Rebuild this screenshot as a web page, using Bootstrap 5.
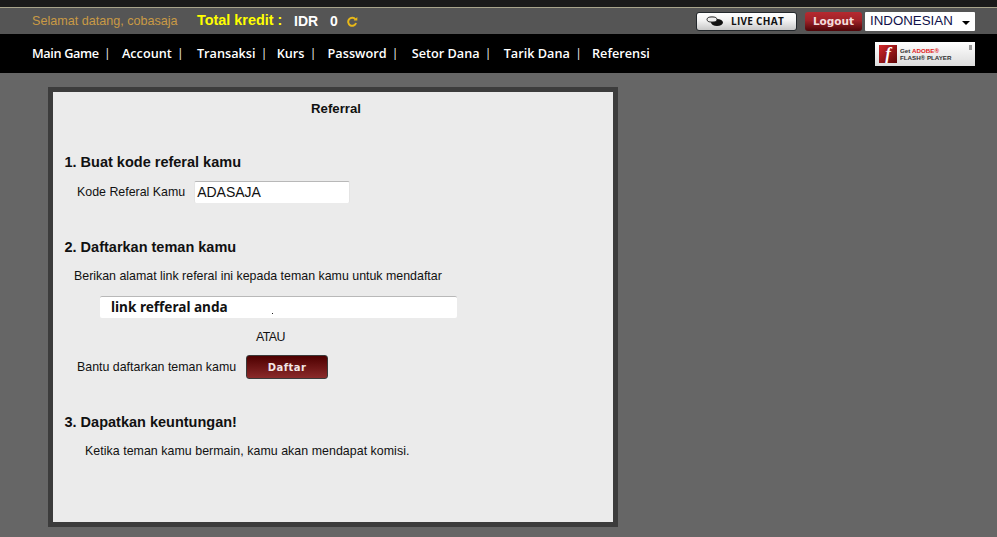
<!DOCTYPE html>
<html lang="id">
<head>
<meta charset="utf-8">
<title>Referral</title>
<link href="https://cdn.jsdelivr.net/npm/bootstrap@5.3.0/dist/css/bootstrap.min.css" rel="stylesheet">
<style>
html,body{height:100%}
body{background:#666;font-family:"Liberation Sans",Arial,sans-serif;font-size:12.4px;color:#111;overflow:hidden}
.strip-top{height:8px;background:#1a1a1a;border-bottom:1px solid #a8a48c}
.bar-info{height:26px;background:#555;padding-left:32px;padding-right:22px}
.welcome{color:#c99a45;width:165px;font-size:12.6px;white-space:nowrap}
.kredit{color:#ff0;font-size:14.4px;font-weight:700;width:97px;white-space:nowrap}
.idr{color:#fff;font-size:14px;font-weight:700;width:36px}
.zero{color:#fff;font-size:14px;font-weight:700;width:17px}
.chat-btn{width:101px;height:19px;background:linear-gradient(#fff,#f2f2f2 45%,#c8c8c8);border:1px solid #23282c;border-radius:3px;font:700 10px "Open Sans",sans-serif;color:#111;letter-spacing:.3px;margin-right:8px;gap:7px;padding-right:3px}
.out-btn{width:57px;height:19px;background:linear-gradient(#b52a30,#a02228 45%,#4d0508);border-radius:3px;color:#f3dcdc;font:700 10.5px "DejaVu Sans",sans-serif;margin-right:3px}
.lang{width:110px;height:19px;background:#fff;color:#10104a;font-size:13.3px;padding-left:5px;padding-right:5px;border-radius:1px}
.caret-dn{width:0;height:0;border-left:4px solid transparent;border-right:4px solid transparent;border-top:4px solid #000;margin-top:3px}
.bar-nav{height:39px;background:#000;padding-left:32px;padding-right:22px}
.menu-item{color:#fff;font:600 12.7px "Open Sans",sans-serif;text-decoration:none;margin-bottom:2px}
.menu-tight{letter-spacing:-.35px}
.sep{color:#ddd;font-size:12px;margin:0 13px 2px 7px}
.sep-wide{margin-right:15px}
.sep-narrow{margin-right:11px}
.sep-extra{margin-right:14px}
.sep-less{margin-right:12px}
.flash{width:100px;height:24px;background:linear-gradient(#fff,#dcdcdc);gap:3px;padding-left:4px}
.flash-ico{width:18px;height:18px;background:linear-gradient(135deg,#d3282b,#5e0608);color:#fff;font:italic 700 17px/18px "Liberation Serif",serif;text-align:center}
.flash-txt{font:700 6.2px/7px "Liberation Sans",sans-serif;color:#333;white-space:nowrap}
.flash-txt b{color:#e02020}
.flash-mark{top:3px;right:3px;width:3px;height:5px;background:#999}
.panel-box{width:570px;height:440px;margin:14px 0 0 48px;background:#ebebeb;border:5px solid #3c3c3c}
.panel-title{font-size:13.2px;line-height:16px;font-weight:700;text-align:center;padding-top:9px;margin-left:6px}
.step-h{font-size:14.5px;line-height:16px;font-weight:700;margin:0 0 0 11.5px;color:#111}
.lbl{line-height:14px}
.code-box{width:156px;height:22px;background:#fff;border-top:1px solid #b8b8b8;border-left:1px solid #e4e4e4;border-right:1px solid #e4e4e4;border-radius:2px;font-size:14px;line-height:20px;padding-left:2px;margin-left:9px}
.link-box{width:357px;height:22px;margin:13px 0 0 47px;background:#fff;border-top:1px solid #b8b8b8;border-radius:2px;font:700 13.6px/20px "Noto Sans",sans-serif;padding-left:11px;color:#111}
.link-dot{left:172px;top:16px;width:1px;height:1px;background:#222}
.daftar-btn{width:82px;height:24px;margin-left:10px;background:linear-gradient(#4e0000,#8a2a2a);border:1px solid #3a3a3a;border-radius:3px;color:#f2e6e6;font:700 10px "DejaVu Sans",sans-serif;letter-spacing:.5px}
.sec-one{padding-top:37px}
.row-code{margin:11px 0 0 24px}
.sec-two{padding-top:36px}
.txt-link{margin:14px 0 0 21px}
.atau{margin:12px 0 0 203px;letter-spacing:-.6px}
.row-daftar{margin:11px 0 0 24px}
.sec-three{padding-top:35px}
.txt-komisi{margin:14px 0 0 32px;letter-spacing:.04px}
</style>
</head>
<body>
<div class="strip-top"></div>
<div class="bar-info d-flex align-items-center">
  <span class="welcome">Selamat datang, cobasaja</span>
  <span class="kredit">Total kredit :</span>
  <span class="idr">IDR</span>
  <span class="zero">0</span>
  <svg width="11" height="11" viewBox="0 0 11 11" fill="none" stroke="#e8b818" stroke-width="2"><path d="M9 7a4 4 0 1 1-.6-3.6"/><path d="M10.3 1v3.6H6.7" fill="#e8b818" stroke="none"/></svg>
  <div class="ms-auto d-flex align-items-center">
    <div class="chat-btn d-flex align-items-center justify-content-center">
      <svg width="18" height="11" viewBox="0 0 18 11"><ellipse cx="11" cy="6.5" rx="6" ry="3.5" fill="#111"/><ellipse cx="6" cy="3.5" rx="5" ry="2.6" fill="#eee" stroke="#222"/></svg>
      <span>LIVE CHAT</span>
    </div>
    <div class="out-btn d-flex align-items-center justify-content-center">Logout</div>
    <div class="lang d-flex align-items-center justify-content-between"><span>INDONESIAN</span><span class="caret-dn"></span></div>
  </div>
</div>
<div class="bar-nav d-flex align-items-center">
  <a class="menu-item menu-tight" href="#">Main Game</a><span class="sep">|</span>
  <a class="menu-item" href="#">Account</a><span class="sep sep-wide">|</span>
  <a class="menu-item" href="#">Transaksi</a><span class="sep sep-narrow">|</span>
  <a class="menu-item" href="#">Kurs</a><span class="sep">|</span>
  <a class="menu-item" href="#">Password</a><span class="sep sep-wide">|</span>
  <a class="menu-item" href="#">Setor Dana</a><span class="sep sep-extra">|</span>
  <a class="menu-item" href="#">Tarik Dana</a><span class="sep sep-less">|</span>
  <a class="menu-item" href="#">Referensi</a>
  <div class="flash ms-auto d-flex align-items-center position-relative">
    <div class="flash-ico">f</div>
    <div class="flash-txt">Get <b>ADOBE®</b><br>FLASH® PLAYER</div>
    <span class="flash-mark position-absolute"></span>
  </div>
</div>
<div class="panel-box">
  <div class="panel-title">Referral</div>
  <div class="sec-one">
    <h2 class="step-h">1. Buat kode referal kamu</h2>
    <div class="row-code d-flex align-items-center"><span class="lbl">Kode Referal Kamu</span><div class="code-box">ADASAJA</div></div>
  </div>
  <div class="sec-two">
    <h2 class="step-h">2. Daftarkan teman kamu</h2>
    <div class="txt-link lbl">Berikan alamat link referal ini kepada teman kamu untuk mendaftar</div>
    <div class="link-box position-relative">link refferal anda<span class="link-dot position-absolute"></span></div>
    <div class="atau lbl">ATAU</div>
    <div class="row-daftar d-flex align-items-center"><span class="lbl">Bantu daftarkan teman kamu</span><div class="daftar-btn d-flex align-items-center justify-content-center">Daftar</div></div>
  </div>
  <div class="sec-three">
    <h2 class="step-h">3. Dapatkan keuntungan!</h2>
    <div class="txt-komisi lbl">Ketika teman kamu bermain, kamu akan mendapat komisi.</div>
  </div>
</div>
<script src="https://cdn.jsdelivr.net/npm/bootstrap@5.3.0/dist/js/bootstrap.bundle.min.js"></script>
</body>
</html>
